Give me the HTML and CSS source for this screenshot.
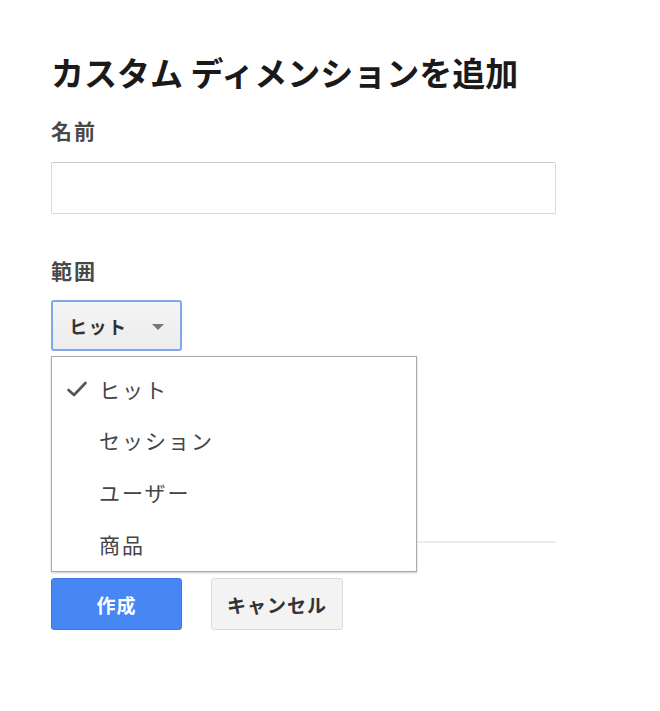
FILE: index.html
```html
<!DOCTYPE html>
<html lang="ja">
<head>
<meta charset="utf-8">
<link rel="stylesheet" href="styles.css">
</head>
<body>
<div class="page">
  <h1 class="title">カスタム ディメンションを追加</h1>
  <div class="label label-name">名前</div>
  <div class="input"></div>
  <div class="label label-scope">範囲</div>
  <div class="select-wrap">
    <div class="select">
      <span class="select-text">ヒット</span>
      <span class="caret"></span>
    </div>
    <ul class="menu">
      <li class="menu-item selected"><svg class="check" viewBox="0 0 24 24" width="24" height="24"><path d="M3.5 13 L9 18 L20.5 6" fill="none" stroke="#555" stroke-width="2.6" stroke-linecap="round" stroke-linejoin="round"/></svg>ヒット</li>
      <li class="menu-item">セッション</li>
      <li class="menu-item">ユーザー</li>
      <li class="menu-item">商品</li>
    </ul>
  </div>
  <div class="divider"></div>
  <div class="actions">
    <button class="btn btn-primary">作成</button>
    <button class="btn btn-default">キャンセル</button>
  </div>
</div>
</body>
</html>
```
FILE: styles.css
```css
html, body {
  margin: 0;
  padding: 0;
  background: #ffffff;
}
body {
  font-family: "Noto Sans CJK JP", "Noto Sans", sans-serif;
  color: #333;
}
.page {
  padding: 52px 0 0 51px;
  width: 505px;
}
.title {
  margin: 0;
  font-size: 33px;
  line-height: 40px;
  font-weight: 700;
  color: #1a1a1a;
  white-space: nowrap;
}
.label {
  font-size: 21px;
  line-height: 24px;
  font-weight: 700;
  color: #484848;
  letter-spacing: 2px;
}
.label-name {
  margin-top: 26px;
}
.input {
  margin-top: 20px;
  height: 50px;
  border: 1px solid #d9d9d9;
  border-top-color: #c8c8c8;
  border-radius: 2px;
  background: #fff;
}
.label-scope {
  margin-top: 44px;
}
.select-wrap {
  position: relative;
  margin-top: 18px;
  height: 52px;
}
.select {
  box-sizing: border-box;
  width: 131px;
  height: 51px;
  border: 2px solid #7fa7ec;
  border-radius: 3px;
  background: linear-gradient(#f5f5f5, #ececec);
  display: flex;
  align-items: center;
  padding: 0 0 0 16px;
}
.select-text {
  font-size: 18px;
  font-weight: 700;
  color: #333;
  letter-spacing: 1.5px;
  flex: 1;
}
.caret {
  width: 0;
  height: 0;
  border-left: 6px solid transparent;
  border-right: 6px solid transparent;
  border-top: 6px solid #777;
  margin-right: 16px;
  margin-top: 3px;
}
.menu {
  position: absolute;
  left: 0;
  top: 56px;
  width: 366px;
  height: 216px;
  box-sizing: border-box;
  margin: 0;
  padding: 6px 0 0 0;
  list-style: none;
  background: #fff;
  border: 1px solid #a9a9a9;
  box-shadow: 0 1px 2px rgba(0,0,0,0.2);
  z-index: 2;
}
.menu-item {
  height: 51.6px;
  display: flex;
  align-items: center;
  padding-left: 47px;
  font-size: 21px;
  color: #444;
  letter-spacing: 2px;
  position: relative;
}
.check {
  position: absolute;
  left: 13px;
  top: 14px;
}
.divider {
  margin-top: 189px;
  height: 2px;
  background: #ececec;
}
.actions {
  margin-top: 35px;
  display: flex;
  gap: 29px;
}
.btn {
  height: 52px;
  font-family: "Noto Sans CJK JP", "Noto Sans", sans-serif;
  font-size: 19px;
  font-weight: 700;
  letter-spacing: 1px;
  border-radius: 3px;
  padding: 0;
  cursor: pointer;
}
.btn-primary {
  width: 131px;
  color: #fff;
  background: #4787f4;
  border: 1px solid #3b78e7;
}
.btn-default {
  width: 132px;
  color: #333;
  background: #f3f3f3;
  border: 1px solid #dcdcdc;
}
```
